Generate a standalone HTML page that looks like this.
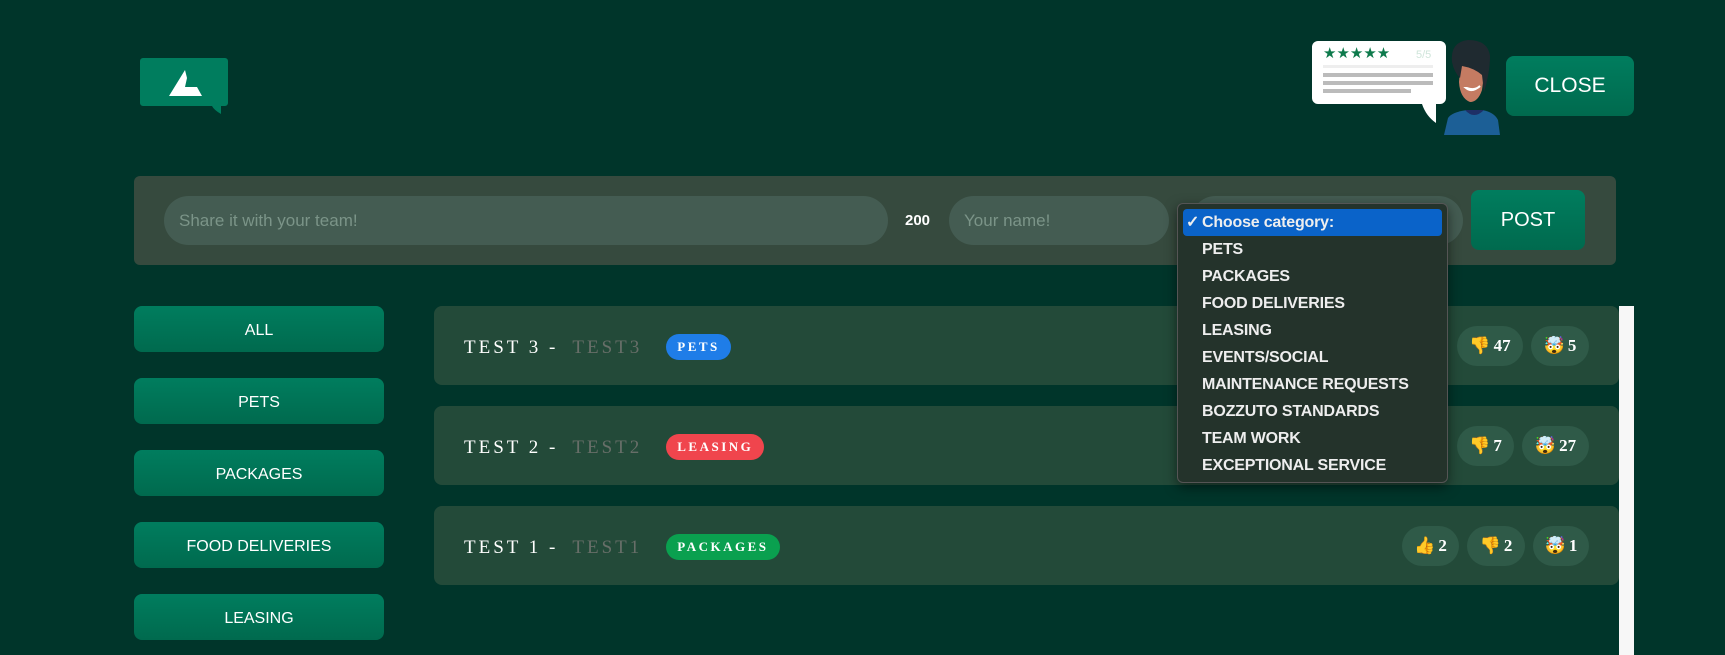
<!DOCTYPE html>
<html><head><meta charset="utf-8"><style>
*{margin:0;padding:0;box-sizing:border-box}
body{width:1725px;height:655px;background:#00352a;position:relative;overflow:hidden;font-family:"Liberation Sans",sans-serif}
.abs{position:absolute}
.btn{position:absolute;background:linear-gradient(#007d5e,#006a4e);border-radius:8px;color:#fff;display:flex;align-items:center;justify-content:center}
.panel{left:134px;top:176px;width:1482px;height:89px;background:#364a3e;border-radius:6px}
.inp{position:absolute;background:#445c52;border-radius:25px;height:49px;top:196px;color:#7b9488;font-size:17px;display:flex;align-items:center;padding-left:15px}
.side{left:134px;width:250px;height:46px;font-size:16px;padding-top:3px}
.card{position:absolute;left:434px;width:1185px;height:79px;background:#234a39;border-radius:8px}
.title{position:absolute;left:30px;top:28px;font-family:"Liberation Serif",serif;font-size:19px;letter-spacing:3px;color:#fff;white-space:nowrap}
.title span.g{color:#676e68;margin-left:14px}
.badge{display:inline-block;color:#fff;font-size:13px;letter-spacing:2.5px;padding:0 11px;height:26px;line-height:26px;border-radius:13px;margin-left:24px;vertical-align:2px;font-weight:bold}
.pill{position:absolute;top:20px;height:40px;background:#2f5a48;border-radius:20px;color:#fff;font-family:"Liberation Serif",serif;font-size:17px;font-weight:bold;display:flex;align-items:center;justify-content:center;gap:3px}
.dd{left:1177px;top:203px;width:271px;height:280px;background:#24332b;border:1px solid #555;border-radius:6px;box-shadow:0 4px 12px rgba(0,0,0,.5);color:#eee;font-size:16px}
.dd div{height:27px;line-height:27px;padding-left:24px;white-space:nowrap;font-weight:bold;letter-spacing:-0.2px}
</style></head><body>
<svg class="abs" style="left:140px;top:58px" width="90" height="58" viewBox="0 0 90 58">
<path d="M3 0H85a3 3 0 0 1 3 3V45a3 3 0 0 1-3 3H81V56Q74 52 72 48H3a3 3 0 0 1-3-3V3a3 3 0 0 1 3-3z" fill="#007d5e"/>
<path d="M45 12L29 38H62L57 29H45L47 20z" fill="#fff"/>
</svg>
<svg class="abs" style="left:1312px;top:40px" width="190" height="95" viewBox="0 0 190 95">
<path d="M6 1H128a6 6 0 0 1 6 6V58a6 6 0 0 1-6 6H124V83Q114 76 110 64H6a6 6 0 0 1-6-6V7a6 6 0 0 1 6-6z" fill="#fff"/>
<text x="11" y="18" fill="#0e7a4c" font-size="15">★★★★★</text><text x="104" y="18" fill="#cfe5da" font-size="11">5/5</text>
<rect x="11" y="25" width="110" height="3" fill="#eee"/><rect x="11" y="33" width="110" height="4" fill="#bbb"/><rect x="11" y="41" width="110" height="4" fill="#bbb"/><rect x="11" y="49" width="88" height="4" fill="#bbb"/>
<path d="M132 95L136 78Q140 72 155 70H170Q182 72 186 80L188 95z" fill="#1c5f96"/>
<path d="M153 70Q162 80 172 70z" fill="#1e2f66"/>
<path d="M148 30Q150 18 160 16Q172 18 172 35L170 50Q166 62 158 62Q148 58 147 42z" fill="#c47b62"/>
<path d="M140 22Q138 2 156 0Q176 0 178 16Q178 32 172 52L170 35Q162 28 150 26L148 38Q142 32 140 22z" fill="#1f2a30"/>
<path d="M154 48Q160 53 168 46Q163 51 155 48z" fill="#fff" stroke="#fff" stroke-width="2"/>
</svg>
<div class="btn" style="left:1506px;top:56px;width:128px;height:60px;font-size:21px">CLOSE</div>
<div class="abs panel"></div>
<div class="inp" style="left:164px;width:724px">Share it with your team!</div>
<div class="abs" style="left:905px;top:212px;color:#fff;font-size:15px;font-weight:bold">200</div>
<div class="inp" style="left:949px;width:220px">Your name!</div>
<div class="inp" style="left:1191px;width:272px"></div>
<div class="btn" style="left:1471px;top:190px;width:114px;height:60px;font-size:20px">POST</div>
<div class="btn side" style="top:306px">ALL</div>
<div class="btn side" style="top:378px">PETS</div>
<div class="btn side" style="top:450px">PACKAGES</div>
<div class="btn side" style="top:522px">FOOD DELIVERIES</div>
<div class="btn side" style="top:594px">LEASING</div>
<div class="card" style="top:306px"><div class="title">TEST 3 -<span class="g">TEST3</span><span class="badge" style="background:#1f7de8">PETS</span></div>
<div class="pill" style="left:1023px;width:66px">👎<span>47</span></div><div class="pill" style="left:1097px;width:58px">🤯<span>5</span></div></div>
<div class="card" style="top:406px"><div class="title">TEST 2 -<span class="g">TEST2</span><span class="badge" style="background:#f0454d">LEASING</span></div>
<div class="pill" style="left:1023px;width:57px">👎<span>7</span></div><div class="pill" style="left:1088px;width:67px">🤯<span>27</span></div></div>
<div class="card" style="top:506px"><div class="title">TEST 1 -<span class="g">TEST1</span><span class="badge" style="background:#0aa04f">PACKAGES</span></div>
<div class="pill" style="left:968px;width:57px">👍<span>2</span></div><div class="pill" style="left:1033px;width:58px">👎<span>2</span></div><div class="pill" style="left:1099px;width:56px">🤯<span>1</span></div></div>
<div class="abs" style="left:1619px;top:306px;width:15px;height:349px;background:#f7f7f7"></div>
<div class="abs dd">
<div style="background:#0a63c9;margin:5px 5px 0;padding-left:19px;border-radius:4px;height:27px;position:relative"><span style="position:absolute;left:3px">✓</span>Choose category:</div>
<div>PETS</div><div>PACKAGES</div><div>FOOD DELIVERIES</div><div>LEASING</div><div>EVENTS/SOCIAL</div><div>MAINTENANCE REQUESTS</div><div>BOZZUTO STANDARDS</div><div>TEAM WORK</div><div>EXCEPTIONAL SERVICE</div>
</div>
</body></html>
